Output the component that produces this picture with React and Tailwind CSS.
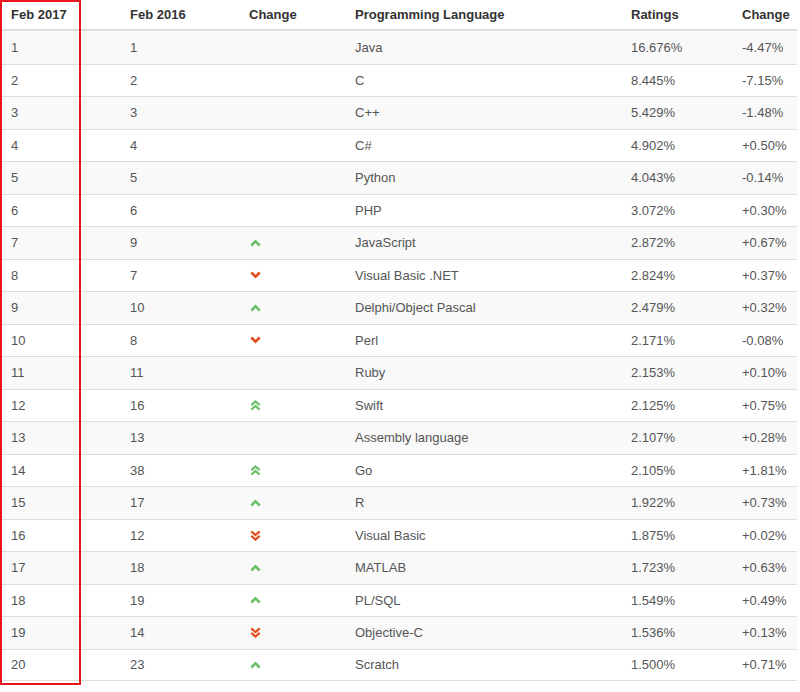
import React from "react";

const rows = [
  [1, 1, "", "Java", "16.676%", "-4.47%"],
  [2, 2, "", "C", "8.445%", "-7.15%"],
  [3, 3, "", "C++", "5.429%", "-1.48%"],
  [4, 4, "", "C#", "4.902%", "+0.50%"],
  [5, 5, "", "Python", "4.043%", "-0.14%"],
  [6, 6, "", "PHP", "3.072%", "+0.30%"],
  [7, 9, "up", "JavaScript", "2.872%", "+0.67%"],
  [8, 7, "down", "Visual Basic .NET", "2.824%", "+0.37%"],
  [9, 10, "up", "Delphi/Object Pascal", "2.479%", "+0.32%"],
  [10, 8, "down", "Perl", "2.171%", "-0.08%"],
  [11, 11, "", "Ruby", "2.153%", "+0.10%"],
  [12, 16, "up2", "Swift", "2.125%", "+0.75%"],
  [13, 13, "", "Assembly language", "2.107%", "+0.28%"],
  [14, 38, "up2", "Go", "2.105%", "+1.81%"],
  [15, 17, "up", "R", "1.922%", "+0.73%"],
  [16, 12, "down2", "Visual Basic", "1.875%", "+0.02%"],
  [17, 18, "up", "MATLAB", "1.723%", "+0.63%"],
  [18, 19, "up", "PL/SQL", "1.549%", "+0.49%"],
  [19, 14, "down2", "Objective-C", "1.536%", "+0.13%"],
  [20, 23, "up", "Scratch", "1.500%", "+0.71%"],
];

function Arrow({ kind }) {
  if (!kind) return null;
  const up = kind.startsWith("up");
  const dbl = kind.endsWith("2");
  const color = up ? "#6dbf6a" : "#e0501e";
  if (dbl) {
    return (
      <svg width="11" height="11" viewBox="0 0 11 11" className="block">
        {up ? (
          <>
            <polyline points="1.3,5.2 5.5,1.5 9.7,5.2" fill="none" stroke={color} strokeWidth="2.2" />
            <polyline points="1.3,9.6 5.5,5.9 9.7,9.6" fill="none" stroke={color} strokeWidth="2.2" />
          </>
        ) : (
          <>
            <polyline points="1.3,1.4 5.5,5.1 9.7,1.4" fill="none" stroke={color} strokeWidth="2.2" />
            <polyline points="1.3,5.8 5.5,9.5 9.7,5.8" fill="none" stroke={color} strokeWidth="2.2" />
          </>
        )}
      </svg>
    );
  }
  return (
    <svg width="11" height="8" viewBox="0 0 11 8" className="block">
      {up ? (
        <polyline points="1.3,6.5 5.5,2.3 9.7,6.5" fill="none" stroke={color} strokeWidth="2.6" />
      ) : (
        <polyline points="1.3,1.5 5.5,5.7 9.7,1.5" fill="none" stroke={color} strokeWidth="2.6" />
      )}
    </svg>
  );
}

const cols = ["w-[119px]", "w-[119px]", "w-[106px]", "w-[276px]", "w-[111px]", "w-[66px]"];

export default function App() {
  return (
    <div
      className="relative w-[800px] h-[692px] bg-white text-[13px]"
      style={{ fontFamily: '"Liberation Sans", Arial, sans-serif' }}
    >
      <div className="w-[797px]">
        <div className="flex h-[31px] items-center border-b-2 border-[#dddddd] font-bold text-[#333333]">
          <div className={`${cols[0]} pl-[11px]`}>Feb 2017</div>
          <div className={`${cols[1]} pl-[11px]`}>Feb 2016</div>
          <div className={`${cols[2]} pl-[11px]`}>Change</div>
          <div className={`${cols[3]} pl-[11px]`}>Programming Language</div>
          <div className={`${cols[4]} pl-[11px]`}>Ratings</div>
          <div className={`${cols[5]} pl-[11px]`}>Change</div>
        </div>
        {rows.map((r, i) => (
          <div
            key={i}
            className={`flex h-[32.5px] items-center text-[#555555] ${i > 0 ? "border-t border-[#dddddd]" : ""} ${i === rows.length - 1 ? "border-b border-[#dddddd]" : ""} ${i % 2 === 0 ? "bg-[#f9f9f9]" : "bg-white"}`}
          >
            <div className={`${cols[0]} pl-[11px]`}>{r[0]}</div>
            <div className={`${cols[1]} pl-[11px]`}>{r[1]}</div>
            <div className={`${cols[2]} pl-[12px] flex items-center`}>
              <Arrow kind={r[2]} />
            </div>
            <div className={`${cols[3]} pl-[11px]`}>{r[3]}</div>
            <div className={`${cols[4]} pl-[11px]`}>{r[4]}</div>
            <div className={`${cols[5]} pl-[11px]`}>{r[5]}</div>
          </div>
        ))}
      </div>
      <div className="absolute left-0 top-0 w-[81px] h-[685px] border-2 border-[#e8141e] pointer-events-none" />
    </div>
  );
}
